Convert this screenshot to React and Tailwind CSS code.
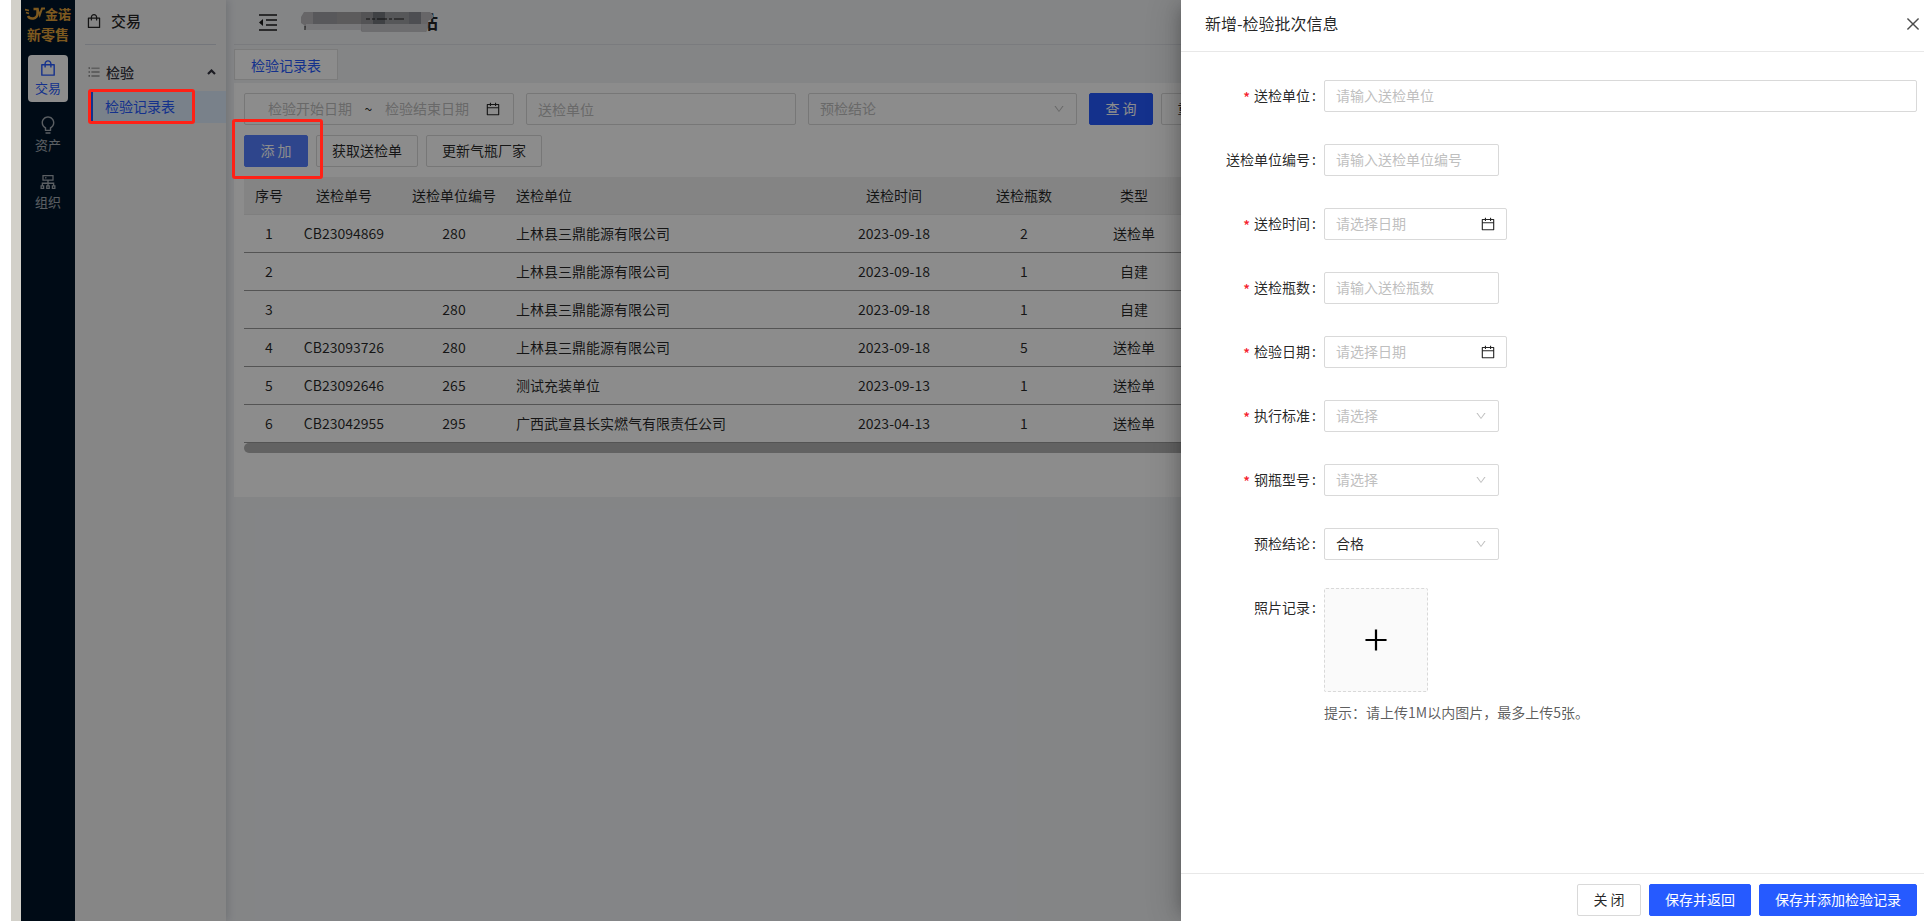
import React from 'react';
import {
  AiOutlineShopping,
  AiOutlineBulb,
  AiOutlineCluster,
  AiOutlineBars,
  AiOutlineCalendar,
  AiOutlineDown,
  AiOutlineClose,
  AiOutlinePlus,
} from 'react-icons/ai';

const NAV = [
  { label: '交易', Icon: AiOutlineShopping, active: true },
  { label: '资产', Icon: AiOutlineBulb },
  { label: '组织', Icon: AiOutlineCluster },
];

const ROWS = [
  ['1', 'CB23094869', '280', '上林县三鼎能源有限公司', '2023-09-18', '2', '送检单'],
  ['2', '', '', '上林县三鼎能源有限公司', '2023-09-18', '1', '自建'],
  ['3', '', '280', '上林县三鼎能源有限公司', '2023-09-18', '1', '自建'],
  ['4', 'CB23093726', '280', '上林县三鼎能源有限公司', '2023-09-18', '5', '送检单'],
  ['5', 'CB23092646', '265', '测试充装单位', '2023-09-13', '1', '送检单'],
  ['6', 'CB23042955', '295', '广西武宣县长实燃气有限责任公司', '2023-04-13', '1', '送检单'],
];

const COLUMNS = [
  { title: '序号', width: 'w-[50px]' },
  { title: '送检单号', width: 'w-[100px]' },
  { title: '送检单位编号', width: 'w-[120px]' },
  { title: '送检单位', width: 'w-[310px]', left: true },
  { title: '送检时间', width: 'w-[140px]' },
  { title: '送检瓶数', width: 'w-[120px]' },
  { title: '类型', width: 'w-[100px]' },
];

const FIELDS = [
  { id: 'unit', label: '送检单位', kind: 'text', placeholder: '请输入送检单位', required: true, wide: true },
  { id: 'unit-no', label: '送检单位编号', kind: 'text', placeholder: '请输入送检单位编号' },
  { id: 'send-time', label: '送检时间', kind: 'date', placeholder: '请选择日期', required: true },
  { id: 'count', label: '送检瓶数', kind: 'text', placeholder: '请输入送检瓶数', required: true },
  { id: 'check-date', label: '检验日期', kind: 'date', placeholder: '请选择日期', required: true },
  { id: 'standard', label: '执行标准', kind: 'select', placeholder: '请选择', required: true },
  { id: 'model', label: '钢瓶型号', kind: 'select', placeholder: '请选择', required: true },
  { id: 'result', label: '预检结论', kind: 'select', value: '合格' },
];

const BOX = 'h-8 rounded-[2px] border border-[#d9d9d9] bg-white';
const INPUT = 'text-sm text-black/85 outline-none placeholder:text-[#bfbfbf]';
const BTN = 'h-8 min-w-16 shrink-0 cursor-pointer rounded-[2px] border px-[15px] pb-[2px] text-sm whitespace-nowrap';

function Button({ tone = 'plain', children }) {
  const tones = {
    plain: 'border-[#d9d9d9] bg-white text-black/85',
    primary: 'border-[#265aff] bg-[#265aff] text-white',
    hover: 'border-[#547fff] bg-[#547fff] text-white',
  };
  return (
    <button type="button" className={`${BTN} ${tones[tone]}`}>
      {children}
    </button>
  );
}

function SelectBox({ id, label, placeholder, value, className }) {
  return (
    <div className={`relative ${className}`}>
      <select
        id={id}
        aria-label={label}
        defaultValue={value || ''}
        className={`${BOX} w-full appearance-none px-[11px] pb-[2px] text-sm outline-none ${value ? 'text-black/85' : 'text-[#bfbfbf]'}`}
      >
        <option value={value || ''}>{value || placeholder}</option>
      </select>
      <AiOutlineDown className="pointer-events-none absolute top-[10px] right-3 size-3 text-black/25" />
    </div>
  );
}

function Field({ id, label, kind, placeholder, value, required, wide }) {
  return (
    <div className="flex h-8">
      <FieldLabel id={id} label={label} required={required} />
      {kind === 'text' && (
        <input
          id={id}
          type="text"
          placeholder={placeholder}
          className={`${BOX} ${INPUT} px-[11px] pb-[2px] ${wide ? 'min-w-0 flex-1' : 'w-[175px]'}`}
        />
      )}
      {kind === 'date' && (
        <div className={`${BOX} flex w-[183px] items-center pr-[10px] pl-[11px]`}>
          <input id={id} type="text" placeholder={placeholder} className={`${INPUT} min-w-0 flex-1 pb-[2px]`} />
          <AiOutlineCalendar className="size-4 text-black/85" />
        </div>
      )}
      {kind === 'select' && <SelectBox id={id} placeholder={placeholder} value={value} className="w-[175px]" />}
    </div>
  );
}

function FieldLabel({ id, label, required }) {
  return (
    <label htmlFor={id} className="flex w-[143px] shrink-0 items-center justify-end pr-2 pb-[2px] text-sm text-black/85">
      {required && <span className="mr-1 pt-1 font-medium text-[#f5222d]">*</span>}
      {label}
      <span className="ml-[2px]">:</span>
    </label>
  );
}

function Logo() {
  return (
    <div className="flex w-full flex-col items-center pt-1 font-bold text-[#e3a33a]">
      <div className="flex h-5 items-center text-[13px] leading-5">
        <svg width="20" height="14" viewBox="0 0 20 14" fill="none" stroke="currentColor" aria-hidden="true">
          <path d="M0 2.500l4 1M1 5.500l3 1" strokeWidth="1.800" />
          <path d="M3 9c1.500 3.500 9.500 4 9.500-3V2H8.500" strokeWidth="2.400" />
          <path d="M12.500 2l2.200 6L17 1.500h3" strokeWidth="2" />
        </svg>
        金诺
      </div>
      <div className="text-sm leading-5">新零售</div>
    </div>
  );
}

function NavRail() {
  return (
    <nav className="flex w-[54px] shrink-0 flex-col items-center bg-[#001529]">
      <Logo />
      <div className="mt-[11px] flex flex-col gap-[10px]">
        {NAV.map(({ label, Icon, active }) => (
          <a
            key={label}
            href="#"
            className={`flex h-[47px] w-10 flex-col items-center justify-center rounded pb-[2px] ${active ? 'bg-white text-[#265aff]' : 'text-white/65'}`}
          >
            <Icon className="size-5" />
            <span className="text-[13px] leading-5">{label}</span>
          </a>
        ))}
      </div>
    </nav>
  );
}

function SubMenu() {
  return (
    <aside className="z-[1] flex w-[151px] shrink-0 flex-col bg-[#f5f5f5] shadow-[2px_0_8px_rgba(0,21,41,0.15)]">
      <div className="mr-[10px] ml-[10px] flex h-[45px] items-center gap-2 border-b border-[#d3d8e0] pb-[2px] text-[15px] font-medium text-black/85">
        <AiOutlineShopping className="size-[18px]" />
        交易
      </div>
      <div className="mt-[10px] mb-[2px] flex h-[34px] items-center pr-[10px] pl-3 text-sm font-medium text-[#33333f]">
        <AiOutlineBars className="mr-[5px] size-[14px] text-[#666]" />
        <span className="flex-1">检验</span>
        <svg width="9" height="6" viewBox="0 0 9 6" fill="none" stroke="currentColor" strokeWidth="2.200" aria-hidden="true">
          <path d="M1 5l3.500-3.500L8 5" />
        </svg>
      </div>
      <a href="#" className="ml-4 flex h-8 items-center border-l-2 border-[#265aff] bg-[#dcebfc] pb-[2px] pl-3 text-sm text-[#265aff]">
        检验记录表
      </a>
    </aside>
  );
}

function Records() {
  return (
    <main className="flex min-w-0 flex-1 flex-col overflow-hidden bg-[#f0f2f5] pl-2">
      <header className="flex h-[45px] shrink-0 items-center border-b border-[#dfe1e5] pl-[25px]">
        <svg width="18" height="17" viewBox="0 0 18 17" fill="none" stroke="#1a1a1a" strokeWidth="1.600" aria-hidden="true">
          <path d="M0 1h18M7 6h11M7 11h11M0 16h18" />
          <path d="M0 8.500L4 5v7z" fill="#1a1a1a" stroke="none" />
        </svg>
        <span className="ml-[143px] pb-[2px] text-[18px] font-bold text-black/85">站</span>
      </header>
      <div className="mt-1 flex h-[31px] shrink-0">
        <a href="#" className="flex w-[104px] items-center justify-center border border-[#e0e0e0] bg-white text-sm text-[#265aff]">
          检验记录表
        </a>
      </div>
      <section className="mt-[3px] bg-white pt-[10px] pb-11 pl-[10px]">
        <div className="flex gap-3">
          <div className={`${BOX} flex w-[270px] shrink-0 items-center pr-3 pl-[13px]`}>
            <input type="text" aria-label="检验开始日期" placeholder="检验开始日期" className={`${INPUT} w-[104px] pb-[2px] text-center`} />
            <span className="w-4 text-center text-sm text-black/85">~</span>
            <input type="text" aria-label="检验结束日期" placeholder="检验结束日期" className={`${INPUT} w-[104px] pb-[2px] text-center`} />
            <AiOutlineCalendar className="ml-[6px] size-4 shrink-0 text-black/85" />
          </div>
          <input type="text" aria-label="送检单位" placeholder="送检单位" className={`${BOX} ${INPUT} w-[270px] shrink-0 px-[11px]`} />
          <SelectBox label="预检结论" placeholder="预检结论" className="w-[269px] shrink-0" />
          <div className="flex gap-2">
            <Button tone="primary">查 询</Button>
            <Button>重 置</Button>
          </div>
        </div>
        <div className="mt-[10px] flex gap-2">
          <Button tone="hover">添 加</Button>
          <Button>获取送检单</Button>
          <Button>更新气瓶厂家</Button>
        </div>
        <table className="mt-[10px] w-[940px] table-fixed border-collapse text-sm text-black/85">
          <thead>
            <tr className="h-[37px] border-b border-[#e8e8e8] bg-[#f0f0f0]">
              {COLUMNS.map((c) => (
                <th key={c.title} className={`${c.width} px-[2px] py-0 font-normal ${c.left ? 'text-left' : 'text-center'}`}>
                  {c.title}
                </th>
              ))}
            </tr>
          </thead>
          <tbody>
            {ROWS.map((row) => (
              <tr key={row[0]} className="h-[38px] border-b border-[#999]">
                {row.map((cell, i) => (
                  <td key={COLUMNS[i].title} className={`px-[2px] py-0 ${COLUMNS[i].left ? 'text-left' : 'text-center'}`}>
                    {cell}
                  </td>
                ))}
              </tr>
            ))}
          </tbody>
        </table>
        <div className="h-[10px] rounded-l-[5px] bg-[#b3b3b3]" />
      </section>
    </main>
  );
}

function Drawer() {
  return (
    <section
      role="dialog"
      aria-label="新增-检验批次信息"
      className="absolute inset-y-0 right-0 z-20 flex w-[743px] flex-col bg-white shadow-[-6px_0_16px_-8px_rgba(0,0,0,0.3),-9px_0_28px_0_rgba(0,0,0,0.12)]"
    >
      <header className="flex h-[52px] shrink-0 items-center justify-between border-b border-[#e8e8e8] pr-[2px] pb-[5px] pl-6">
        <h1 className="text-base text-black/85">新增-检验批次信息</h1>
        <button type="button" aria-label="关闭" className="cursor-pointer pt-[2px] text-black/70">
          <AiOutlineClose className="size-[18px]" />
        </button>
      </header>
      <form className="flex flex-1 flex-col gap-8 pt-7 pr-[7px]">
        {FIELDS.map((f) => (
          <Field key={f.id} {...f} />
        ))}
        <div className="-mt-1 flex">
          <div className="flex h-10">
            <FieldLabel id="photo" label="照片记录" />
          </div>
          <div>
            <button
              id="photo"
              type="button"
              className="flex size-[104px] cursor-pointer items-center justify-center rounded-[2px] border border-dashed border-[#d9d9d9] bg-[#fafafa]"
            >
              <AiOutlinePlus className="size-[30px] text-black" />
            </button>
            <p className="mt-[9px] text-sm leading-[22px] text-black/65">提示：请上传1M以内图片，最多上传5张。</p>
          </div>
        </div>
      </form>
      <footer className="flex h-12 shrink-0 items-start justify-end gap-2 border-t border-[#e8e8e8] pt-[10px] pr-[7px]">
        <Button>关 闭</Button>
        <Button tone="primary">保存并返回</Button>
        <Button tone="primary">保存并添加检验记录</Button>
      </footer>
    </section>
  );
}

function Mosaic() {
  return (
    <svg
      className="absolute top-[11px] left-[280px] z-10"
      width="134"
      height="22"
      viewBox="0 0 134 22"
      aria-hidden="true"
    >
      <path d="M3 1h126l3 3v3l-5 3v7l-2 4H61l-2-3H5l-2-4-3-2V6z" fill="#676668" />
      <path d="M12 1h24v12H12z" fill="#58585b" />
      <path d="M36 1h24v12H36z" fill="#5c5b5c" />
      <path d="M60 1h12v12H60z" fill="#535355" />
      <path d="M72 1h12v12H72z" fill="#3f4144" />
      <path d="M84 1h24v12H84z" fill="#565759" />
      <path d="M108 1h12v12h-12z" fill="#4d4e52" />
      <path d="M5 13h55v6H5z" fill="#78787a" />
      <path d="M60 13h66v7l-2 1H61z" fill="#6d6d6f" />
      <path d="M4 15v4M65 8h4M71 8h3M76 8h10M88 8h3M93 8h10" stroke="#111" strokeWidth="1" />
    </svg>
  );
}

export default function App() {
  return (
    <div className="flex min-h-screen bg-white font-['Noto_Sans_CJK_SC',sans-serif]">
      <div className="w-[11px] shrink-0 bg-white" />
      <div className="w-[10px] shrink-0 bg-[#d2d0c9]" />
      <div className="relative flex min-w-0 flex-1 overflow-hidden">
        <NavRail />
        <SubMenu />
        <Records />
        <div className="absolute inset-0 z-10 bg-black/45" />
        <Mosaic />
        <div className="absolute top-[89px] left-[67px] z-10 h-[35px] w-[107px] rounded-[3px] border-3 border-[#ff2116]" />
        <div className="absolute top-[119px] left-[211px] z-10 h-[60px] w-[91px] rounded-[3px] border-3 border-[#ff2116]" />
        <Drawer />
      </div>
    </div>
  );
}
